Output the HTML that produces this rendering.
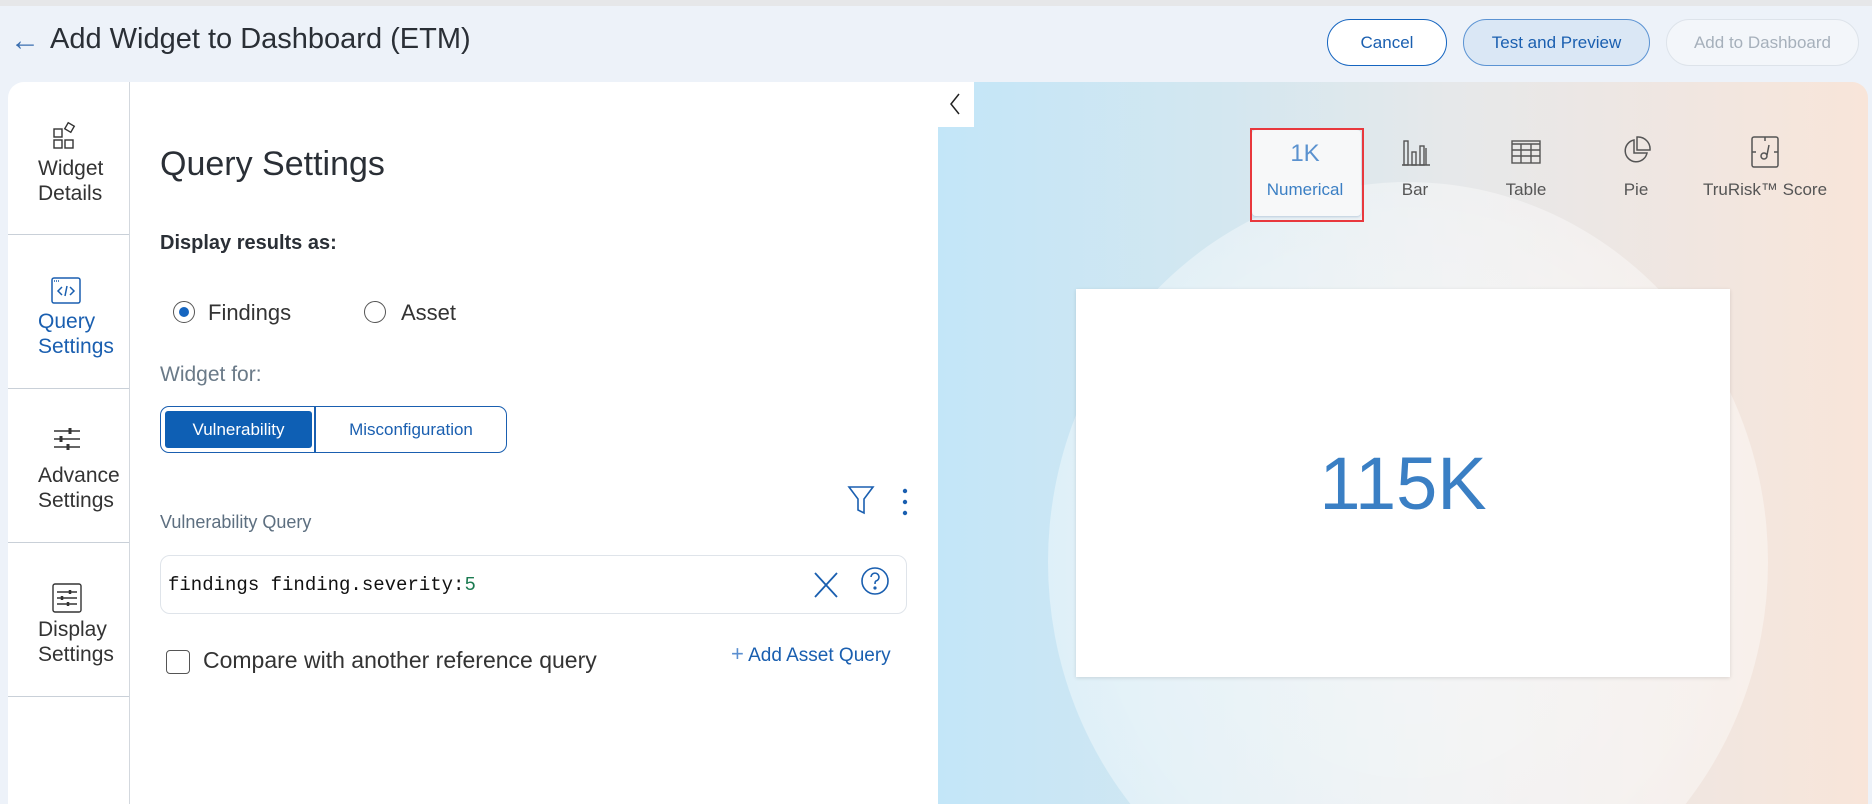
<!DOCTYPE html>
<html><head><meta charset="utf-8"><style>
*{box-sizing:border-box;margin:0;padding:0}
html,body{width:1872px;height:804px;overflow:hidden}
body{background:#edf2f9;font-family:"Liberation Sans",sans-serif;position:relative;color:#222}
.a{position:absolute}
.btn{position:absolute;top:19px;height:47px;border-radius:24px;font-size:17px;display:flex;align-items:center;justify-content:center}
.nav{position:absolute;left:8px;width:121px;border-bottom:1.5px solid #c9d0d8}
.nav .t{position:absolute;left:30px;font-size:21px;line-height:25px;color:#333}
.ct{position:absolute;top:180px;font-size:17px;color:#555;transform:translateX(-50%);white-space:nowrap}
</style></head><body>
<div class="a" style="left:0;top:0;width:1872px;height:6px;background:#e6e7e9"></div>
<div class="a" style="left:10px;top:24px;font-size:30px;color:#3b6fb0">&#8592;</div>
<div class="a" style="left:50px;top:23px;font-size:29px;color:#2a2f36">Add Widget to Dashboard (ETM)</div>
<div class="btn" style="left:1327px;width:120px;border:1.5px solid #1565c0;background:#fff;color:#1a5fb0">Cancel</div>
<div class="btn" style="left:1463px;width:187px;border:1.5px solid #5b93d3;background:#dae7f5;color:#1a5fb0">Test and Preview</div>
<div class="btn" style="left:1666px;width:193px;border:1.5px solid #dde3ea;background:#f3f6fa;color:#a6b0bb">Add to Dashboard</div>

<div class="a" style="left:8px;top:82px;width:930px;height:722px;background:#fff;border-top-left-radius:16px"></div>
<div class="a" style="left:129px;top:82px;width:1px;height:722px;background:#d3d8de"></div>

<div class="nav" style="top:82px;height:153px">
<svg class="a" style="left:44px;top:38px" width="30" height="30" viewBox="0 0 30 30" fill="none" stroke="#333" stroke-width="1.4"><rect x="2" y="9" width="8" height="8"/><rect x="2" y="20" width="8" height="8"/><rect x="13" y="20" width="8" height="8"/><rect x="14" y="4" width="7" height="7" transform="rotate(30 17.5 7.5)"/></svg>
<div class="t" style="top:74px">Widget<br>Details</div></div>
<div class="nav" style="top:235px;height:154px">
<svg class="a" style="left:43px;top:42px" width="30" height="28" viewBox="0 0 30 28" fill="none" stroke="#1a5fb0" stroke-width="1.5"><rect x="1" y="1" width="28" height="25" rx="2"/><path d="M3 4h5" stroke-dasharray="1 1"/><path d="M11 10l-4 4 4 4M19 10l4 4-4 4M16 9l-2 10"/></svg>
<div class="t" style="top:74px;color:#1a5fb0">Query<br>Settings</div></div>
<div class="nav" style="top:389px;height:154px">
<svg class="a" style="left:44px;top:36px" width="30" height="30" viewBox="0 0 30 30" stroke="#333" stroke-width="1.6"><path d="M2 6h26M2 14h26M2 22h26"/><path d="M18 3v6M9 11v6M16 19v6" stroke-width="3"/></svg>
<div class="t" style="top:74px">Advance<br>Settings</div></div>
<div class="nav" style="top:543px;height:154px">
<svg class="a" style="left:44px;top:40px" width="30" height="30" viewBox="0 0 30 30" fill="none" stroke="#333" stroke-width="1.4"><rect x="1" y="1" width="28" height="28" rx="2"/><path d="M5 9h20M5 15h20M5 21h20"/><path d="M18 7v4M10 13v4M16 19v4" stroke-width="2.5"/></svg>
<div class="t" style="top:74px">Display<br>Settings</div></div>

<div class="a" style="left:160px;top:145px;font-size:34px;color:#2a2f36">Query Settings</div>
<div class="a" style="left:160px;top:232px;font-size:20px;font-weight:bold;color:#2a2f36">Display results as:</div>
<div class="a" style="left:173px;top:301px;width:22px;height:22px;border:1.5px solid #555;border-radius:50%"><div class="a" style="left:4.5px;top:4.5px;width:10px;height:10px;border-radius:50%;background:#1565c0"></div></div>
<div class="a" style="left:208px;top:300px;font-size:22px;color:#333">Findings</div>
<div class="a" style="left:364px;top:301px;width:22px;height:22px;border:1.5px solid #555;border-radius:50%"></div>
<div class="a" style="left:401px;top:300px;font-size:22px;color:#333">Asset</div>
<div class="a" style="left:160px;top:363px;font-size:21px;color:#6a7a88">Widget for:</div>
<div class="a" style="left:160px;top:406px;width:347px;height:47px;border:1.5px solid #1a5fb0;border-radius:9px"></div>
<div class="a" style="left:165px;top:411px;width:147px;height:37px;background:#0e5fb4;color:#fff;font-size:17px;display:flex;align-items:center;justify-content:center;border-radius:3px">Vulnerability</div>
<div class="a" style="left:314px;top:407px;width:1.5px;height:45px;background:#1a5fb0"></div>
<div class="a" style="left:316px;top:411px;width:190px;height:37px;color:#1a5fb0;font-size:17px;display:flex;align-items:center;justify-content:center">Misconfiguration</div>

<svg class="a" style="left:847px;top:485px" width="28" height="30" viewBox="0 0 28 30" fill="none" stroke="#1a5fb0" stroke-width="1.6"><path d="M2 2h24l-9 12v14l-6-3v-11z"/></svg>
<svg class="a" style="left:900px;top:487px" width="10" height="30" viewBox="0 0 10 30" fill="#1a5fb0"><circle cx="5" cy="4" r="2.2"/><circle cx="5" cy="15" r="2.2"/><circle cx="5" cy="26" r="2.2"/></svg>
<div class="a" style="left:160px;top:512px;font-size:18px;color:#5d6f80">Vulnerability Query</div>
<div class="a" style="left:160px;top:555px;width:747px;height:59px;border:1.5px solid #dfe4ea;border-radius:10px"></div>
<div class="a" style="left:168px;top:574px;font-family:'Liberation Mono',monospace;font-size:19px;color:#111">findings finding.severity:<span style="color:#1a7a50">5</span></div>
<svg class="a" style="left:813px;top:571px" width="26" height="28" viewBox="0 0 26 28" stroke="#1a5fb0" stroke-width="1.8"><path d="M2 2l22 24M24 2L2 26"/></svg>
<svg class="a" style="left:860px;top:566px" width="30" height="30" viewBox="0 0 30 30" fill="none" stroke="#1a5fb0" stroke-width="1.6"><circle cx="15" cy="15" r="13"/><path d="M11 11a4 4 0 1 1 5 4c-1 .5-1 1.5-1 3"/><circle cx="15" cy="22" r=".8" fill="#1a5fb0"/></svg>
<div class="a" style="left:166px;top:650px;width:24px;height:24px;border:1.5px solid #555;border-radius:4px"></div>
<div class="a" style="left:203px;top:647px;font-size:23px;color:#333">Compare with another reference query</div>
<div class="a" style="left:731px;top:641px;font-size:19px;color:#1a5fb0"><span style="font-size:22px;color:#5b8fd0">+</span> Add Asset Query</div>

<div class="a" style="left:938px;top:82px;width:930px;height:722px;border-top-right-radius:16px;background:linear-gradient(90deg,#c3e6f8 0%,#d3e7f0 30%,#e6e8ea 55%,#f2e6df 85%,#f8e5d9 100%);overflow:hidden">
<div class="a" style="left:110px;top:100px;width:720px;height:760px;border-radius:50%;background:radial-gradient(ellipse at center,rgba(255,255,255,.6) 0%,rgba(255,255,255,.45) 60%,rgba(255,255,255,.2) 100%)"></div>
</div>
<div class="a" style="left:938px;top:82px;width:36px;height:45px;background:#fff"></div>
<svg class="a" style="left:948px;top:92px" width="14" height="24" viewBox="0 0 14 24" fill="none" stroke="#222" stroke-width="1.5"><path d="M11 2L3 12l8 10"/></svg>

<div class="a" style="left:1252px;top:130px;width:109px;height:86px;background:#f7f8f9;border-radius:4px;box-shadow:0 1px 2px #bcd"></div>
<div class="a" style="left:1250px;top:128px;width:114px;height:94px;border:2px solid #e8383d"></div>
<div class="ct" style="left:1305px;top:140px;font-size:24px;color:#5b92cf">1K</div>
<div class="ct" style="left:1305px;color:#3b7fc4">Numerical</div>
<svg class="a" style="left:1401px;top:138px" width="30" height="28" viewBox="0 0 30 28" fill="none" stroke="#555" stroke-width="1.4"><path d="M1 27h28"/><rect x="3" y="3" width="4" height="24"/><rect x="11" y="14" width="4" height="13"/><rect x="19" y="8" width="4" height="19"/><path d="M25 10v17"/></svg>
<div class="ct" style="left:1415px">Bar</div>
<svg class="a" style="left:1511px;top:140px" width="30" height="24" viewBox="0 0 30 24" fill="none" stroke="#555" stroke-width="1.4"><rect x="1" y="1" width="28" height="22"/><path d="M1 4h28M1 10h28M1 16h28M10 4v19M20 4v19"/></svg>
<div class="ct" style="left:1526px">Table</div>
<svg class="a" style="left:1621px;top:136px" width="30" height="30" viewBox="0 0 30 30" fill="none" stroke="#555" stroke-width="1.5"><path d="M13 4a11 11 0 1 0 13 13H13z"/><path d="M16 1a12 12 0 0 1 13 13H16z"/></svg>
<div class="ct" style="left:1636px">Pie</div>
<svg class="a" style="left:1751px;top:136px" width="28" height="32" viewBox="0 0 28 32" fill="none" stroke="#555" stroke-width="1.5"><rect x="1" y="1" width="26" height="30" rx="2"/><circle cx="13" cy="20" r="3"/><path d="M16 19l2-10M1 16h4M23 16h4M14 1v4"/></svg>
<div class="ct" style="left:1765px">TruRisk™ Score</div>

<div class="a" style="left:1076px;top:289px;width:654px;height:388px;background:#fff;box-shadow:0 1px 4px rgba(0,0,0,.12);display:flex;align-items:center;justify-content:center;font-size:74px;color:#3a7fc4">115K</div>
</body></html>
